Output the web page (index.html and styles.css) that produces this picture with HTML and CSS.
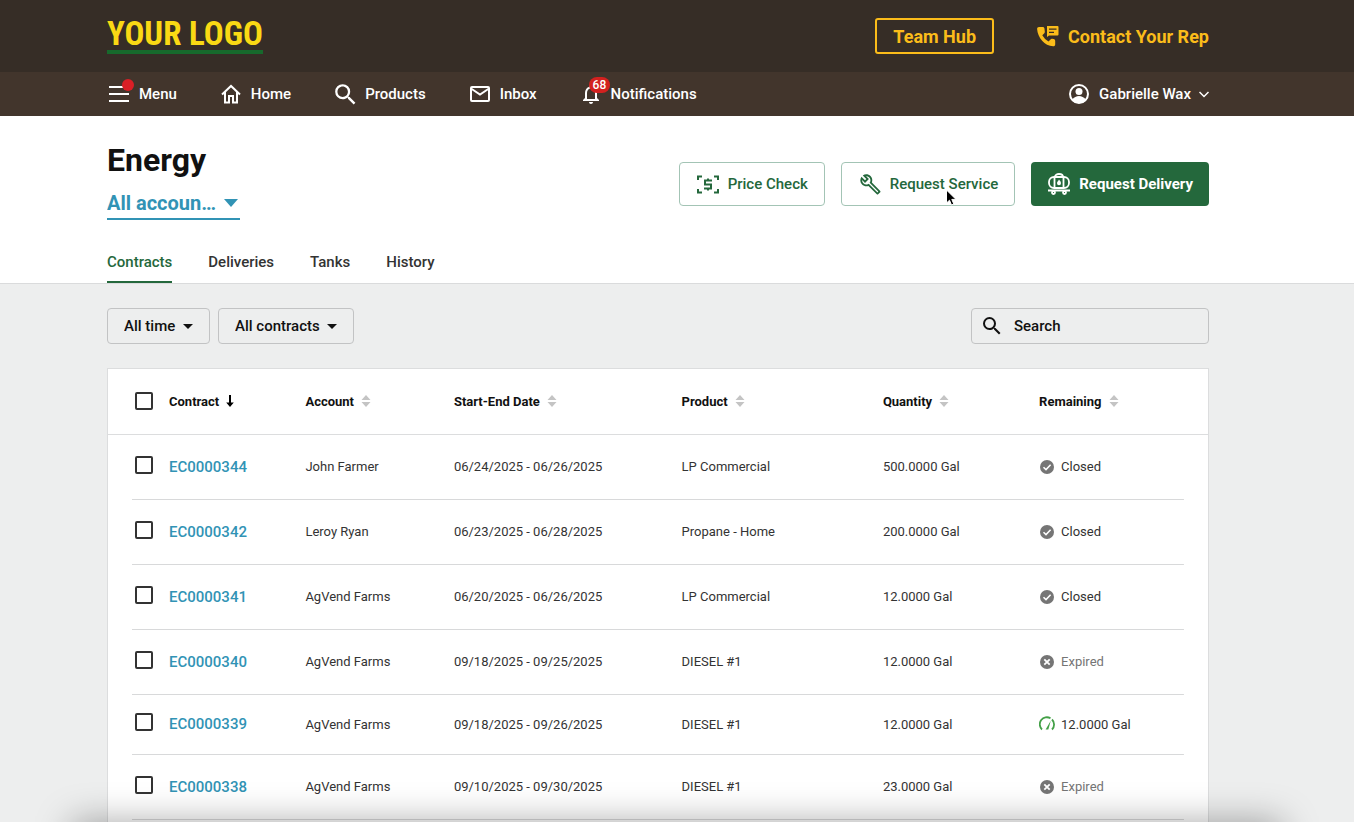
FILE: index.html
```html
<!DOCTYPE html>
<html lang="en">

<head>
	<meta charset="utf-8">
	<meta name="viewport" content="width=device-width, initial-scale=1">
	<title>Energy - Contracts</title>
	<link rel="stylesheet" href="styles.css">
</head>

<body>
	<svg class="sprite" aria-hidden="true">
		<symbol id="sort" viewBox="0 0 10 12">
			<path d="M5 0l4.500 5h-9zM5 12l4.500-5h-9z" fill="#c4c4c4"></path>
		</symbol>
		<symbol id="closed" viewBox="0 0 16 16">
			<circle cx="8" cy="8" r="7" fill="#757575"></circle>
			<path d="M4.500 8.200l2.500 2.400 4.600-4.800" fill="none" stroke="#fff" stroke-width="1.500"></path>
		</symbol>
		<symbol id="expired" viewBox="0 0 16 16">
			<circle cx="8" cy="8" r="7" fill="#757575"></circle>
			<path d="M5.300 5.300l5.400 5.400M10.700 5.300l-5.400 5.400" fill="none" stroke="#fff" stroke-width="1.800"></path>
		</symbol>
		<symbol id="gauge" viewBox="0 0 16 16">
			<path d="M3 13.500A7.070 7.070 0 0 1 11.500 2.300M13 3.500A7.070 7.070 0 0 1 13 13.500" fill="none" stroke="#43a047" stroke-width="1.800"></path>
			<path d="M11.800 4.800L9.300 13.500H6.600z" fill="#43a047"></path>
		</symbol>
		<symbol id="search" viewBox="0 0 24 24">
			<path d="M15.500 14h-.79l-.28-.27A6.471 6.471 0 0 0 16 9.500 6.500 6.500 0 1 0 9.500 16c1.610 0 3.090-.59 4.230-1.570l.27.280v.79l5 4.990L20.490 19l-4.990-5zm-6 0C7.010 14 5 11.990 5 9.500S7.010 5 9.500 5 14 7.010 14 9.500 11.990 14 9.500 14z" fill="currentColor"></path>
		</symbol>
	</svg>

	<header>
		<div class="topbar">
			<a class="logo" href="#">YOUR LOGO</a>
			<div class="topbar-links">
				<button class="team-hub" type="button">Team Hub</button>
				<a class="contact" href="#">
					<svg class="icon" viewBox="0 0 24 24" fill="currentColor">
						<path d="M11 2h10.500a1 1 0 0 1 1 1v7.500a1 1 0 0 1-1 1H13l-2 1.500zM13 4.500v1.200h7.500V4.500zM13 7.800V9h5V7.800z" fill-rule="evenodd"></path>
						<path d="M19 15.200l-2.900-.4c-.6-.1-1.200.1-1.600.6l-2 2a15 15 0 0 1-6.200-6.200l2-2c.4-.4.6-1 .5-1.600L8.400 4.200A1.700 1.700 0 0 0 6.700 3H3C1.900 3 1 3.800 1.100 4.900 1.700 13.500 8.600 21.800 17.200 22.300c1.100.1 2-.8 2-1.900v-3.500c0-.8-.5-1.600-1.200-1.700z"></path>
					</svg>
					Contact Your Rep
				</a>
			</div>
		</div>
		<nav class="navbar">
			<a href="#">
				<span class="icon-wrap">
					<svg class="icon" viewBox="0 0 24 24" fill="currentColor"><path d="M2 4h20v2H2zM2 11h20v2H2zM2 18h20v2H2z"></path></svg>
					<span class="dot"></span>
				</span>
				Menu
			</a>
			<a href="#">
				<svg class="icon" viewBox="0 0 24 24" fill="none" stroke="currentColor" stroke-width="2"><path d="M3 12.500L12 4l9 8.500M6 10v10.500h4V14h4v6.500h4V10"></path></svg>
				Home
			</a>
			<a href="#">
				<svg class="icon nav-search" viewBox="2 2 19 19"><use href="#search" width="24" height="24"></use></svg>
				Products
			</a>
			<a href="#">
				<svg class="icon" viewBox="0 0 24 24" fill="none" stroke="currentColor" stroke-width="2"><rect x="3" y="5" width="18" height="14" rx="1"></rect><path d="M3 6.500l9 6 9-6"></path></svg>
				Inbox
			</a>
			<a href="#">
				<span class="icon-wrap">
					<svg class="icon" viewBox="0 0 24 24" fill="currentColor"><path d="M12 22c1.100 0 2-.9 2-2h-4c0 1.100.9 2 2 2zm6-6v-5c0-3.070-1.630-5.640-4.500-6.320V4c0-.83-.67-1.500-1.500-1.500s-1.500.67-1.500 1.500v.68C7.640 5.360 6 7.920 6 11v5l-2 2v1h16v-1l-2-2zm-2 1H8v-6c0-2.480 1.510-4.500 4-4.500s4 2.020 4 4.500v6z"></path></svg>
					<span class="badge">68</span>
				</span>
				Notifications
			</a>
			<a class="profile" href="#">
				<svg class="icon" viewBox="0 0 24 24" fill="none" stroke="currentColor" stroke-width="2">
					<circle cx="12" cy="12" r="9"></circle>
					<circle cx="12" cy="9.500" r="3.500" fill="currentColor" stroke="none"></circle>
					<path d="M5 18c2-3 4.500-4 7-4s5 1 7 4l-2.500 2.500h-9z" fill="currentColor" stroke="none"></path>
				</svg>
				Gabrielle Wax
				<svg class="chevron" viewBox="0 0 10 10" fill="none" stroke="currentColor" stroke-width="1.500"><path d="M.5 3L5 7.500 9.500 3"></path></svg>
			</a>
		</nav>
	</header>

	<section class="page-head">
		<div class="title-row">
			<div class="title">
				<h1>Energy</h1>
				<label class="account-select">
					<select aria-label="Account">
						<option>All accoun…</option>
					</select>
				</label>
			</div>
			<div class="actions">
				<button class="action" type="button">
					<svg class="icon" viewBox="0 0 24 24" fill="none" stroke="currentColor" stroke-width="2">
						<path d="M6 4.500H2V8M18 4.500h4V8M6 20.500H2V17M18 20.500h4V17"></path>
						<path d="M16 8.500H9v4h6v4H8M12 6.500v2M12 16.500v2"></path>
					</svg>
					Price Check
				</button>
				<button class="action" type="button">
					<svg class="icon" viewBox="0 0 26 26" fill="currentColor">
						<path d="M22.610 18.990l-9.080-9.080c.93-2.340.45-5.100-1.440-7C9.790.61 6.210.4 3.660 2.260L7.500 6.110 6.080 7.520 2.250 3.690C.39 6.230.6 9.820 2.900 12.110c1.860 1.860 4.570 2.350 6.890 1.480l9.110 9.110c.39.39 1.020.39 1.410 0l2.300-2.300c.4-.38.4-1.010 0-1.410zm-3 1.600l-9.460-9.460c-.61.45-1.290.72-2 .82-1.360.2-2.790-.21-3.830-1.250C3.370 9.760 2.930 8.500 3 7.260l3.090 3.090 4.240-4.240-3.090-3.090c1.240-.07 2.490.37 3.440 1.310 1.080 1.080 1.490 2.570 1.240 3.960-.12.71-.42 1.370-.88 1.960l9.450 9.450-.88.89z" transform="translate(1.500 1.500)"></path>
					</svg>
					Request Service
				</button>
				<button class="action primary" type="button">
					<svg class="icon" viewBox="0 0 24 24" fill="none" stroke="currentColor" stroke-width="1.800">
						<rect x="2" y="5" width="20" height="11" rx="5"></rect>
						<path d="M8 5c0-4 8-4 8 0M7.500 5v11M16.500 5v11M1 18.500h22"></path>
						<circle cx="6.500" cy="20.500" r="1.500"></circle>
						<circle cx="17.500" cy="20.500" r="1.500"></circle>
						<path d="M12 7.500c1 1.400 2 2.300 2 3.700a2 2 0 0 1-4 0c0-1.200 1-2 2-3.700z" fill="currentColor" stroke="none"></path>
					</svg>
					Request Delivery
				</button>
				<svg class="cursor" viewBox="0 0 12 18"><path d="M1.500 1v13l3-2.800 2 4.800 2.300-1-2-4.600H11z" fill="#000" stroke="#fff"></path></svg>
			</div>
		</div>
		<nav class="tabs">
			<a class="active" href="#">Contracts</a>
			<a href="#">Deliveries</a>
			<a href="#">Tanks</a>
			<a href="#">History</a>
		</nav>
	</section>

	<main>
		<div class="filters">
			<label class="filter">
				<select aria-label="Period"><option>All time</option></select>
			</label>
			<label class="filter">
				<select aria-label="Contracts"><option>All contracts</option></select>
			</label>
			<label class="search">
				<svg class="icon"><use href="#search"></use></svg>
				<input type="text" placeholder="Search" aria-label="Search">
			</label>
		</div>

		<div class="card">
			<table>
				<colgroup>
					<col class="col-check">
					<col class="col-contract">
					<col class="col-account">
					<col class="col-date">
					<col class="col-product">
					<col class="col-quantity">
					<col>
				</colgroup>
				<thead>
					<tr>
						<th><input type="checkbox" aria-label="Select all"></th>
						<th>Contract <svg class="arrow" viewBox="0 0 8 12"><path d="M3 0h2v7.500h2.800L4 12 .2 7.500H3z"></path></svg></th>
						<th>Account <svg class="sort"><use href="#sort"></use></svg></th>
						<th>Start-End Date <svg class="sort"><use href="#sort"></use></svg></th>
						<th>Product <svg class="sort"><use href="#sort"></use></svg></th>
						<th>Quantity <svg class="sort"><use href="#sort"></use></svg></th>
						<th>Remaining <svg class="sort"><use href="#sort"></use></svg></th>
					</tr>
				</thead>
				<tbody>
					<tr>
						<td><input type="checkbox" aria-label="Select EC0000344"></td>
						<td><a href="#">EC0000344</a></td>
						<td>John Farmer</td>
						<td>06/24/2025 - 06/26/2025</td>
						<td>LP Commercial</td>
						<td>500.0000 Gal</td>
						<td><span class="status"><svg><use href="#closed"></use></svg>Closed</span></td>
					</tr>
					<tr>
						<td><input type="checkbox" aria-label="Select EC0000342"></td>
						<td><a href="#">EC0000342</a></td>
						<td>Leroy Ryan</td>
						<td>06/23/2025 - 06/28/2025</td>
						<td>Propane - Home</td>
						<td>200.0000 Gal</td>
						<td><span class="status"><svg><use href="#closed"></use></svg>Closed</span></td>
					</tr>
					<tr>
						<td><input type="checkbox" aria-label="Select EC0000341"></td>
						<td><a href="#">EC0000341</a></td>
						<td>AgVend Farms</td>
						<td>06/20/2025 - 06/26/2025</td>
						<td>LP Commercial</td>
						<td>12.0000 Gal</td>
						<td><span class="status"><svg><use href="#closed"></use></svg>Closed</span></td>
					</tr>
					<tr>
						<td><input type="checkbox" aria-label="Select EC0000340"></td>
						<td><a href="#">EC0000340</a></td>
						<td>AgVend Farms</td>
						<td>09/18/2025 - 09/25/2025</td>
						<td>DIESEL #1</td>
						<td>12.0000 Gal</td>
						<td><span class="status expired"><svg><use href="#expired"></use></svg>Expired</span></td>
					</tr>
					<tr class="open">
						<td><input type="checkbox" aria-label="Select EC0000339"></td>
						<td><a href="#">EC0000339</a></td>
						<td>AgVend Farms</td>
						<td>09/18/2025 - 09/26/2025</td>
						<td>DIESEL #1</td>
						<td>12.0000 Gal</td>
						<td><span class="status"><svg><use href="#gauge"></use></svg>12.0000 Gal</span></td>
					</tr>
					<tr>
						<td><input type="checkbox" aria-label="Select EC0000338"></td>
						<td><a href="#">EC0000338</a></td>
						<td>AgVend Farms</td>
						<td>09/10/2025 - 09/30/2025</td>
						<td>DIESEL #1</td>
						<td>23.0000 Gal</td>
						<td><span class="status expired"><svg><use href="#expired"></use></svg>Expired</span></td>
					</tr>
				</tbody>
			</table>
		</div>
	</main>
	<div class="bottom-shade"></div>
</body>

</html>
```
FILE: styles.css
```css
* {
	box-sizing: border-box;
}

body {
	background-color: #EDEEEE;
	color: #333;
	font-family: Roboto, sans-serif;
	font-size: 15px;
	font-weight: 500;
	margin: 0;
	overflow: hidden;
}

a {
	color: inherit;
	text-decoration: none;
}

button, input, select {
	color: inherit;
	font: inherit;
}

.sprite {
	display: none;
}

.icon {
	display: block;
	flex: none;
	height: 24px;
	width: 24px;
}

.topbar, .navbar, .page-head, main {
	padding-left: 107px;
	padding-right: 145px;
}

/* top bar */

.topbar {
	align-items: center;
	background-color: #362D26;
	color: #FBBC1A;
	display: flex;
	font-size: 18px;
	font-weight: 700;
	height: 72px;
	justify-content: space-between;
}

.logo {
	border-bottom: 4px solid #17692C;
	color: #FAD914;
	font-family: "Liberation Sans Narrow", "Roboto Condensed", Roboto, sans-serif;
	font-size: 33px;
	line-height: 32px;
}

.topbar-links {
	align-items: center;
	display: flex;
	gap: 42px;
}

.team-hub {
	background: none;
	border: 2px solid #FBBC1A;
	border-radius: 3px;
	height: 36px;
	padding: 0 16px;
}

.contact {
	align-items: center;
	display: flex;
	gap: 8px;
}

/* navigation */

.navbar {
	background-color: #42352C;
	color: #FFF;
	display: flex;
	gap: 42px;
	height: 44px;
}

.navbar a {
	align-items: center;
	display: flex;
	gap: 8px;
}

.nav-search {
	padding: 1px;
}

.navbar .profile {
	margin-left: auto;
}

.chevron {
	height: 10px;
	width: 10px;
}

.icon-wrap {
	position: relative;
}

.dot {
	background-color: #DA1F26;
	border-radius: 50%;
	height: 12px;
	position: absolute;
	right: -3px;
	top: -3px;
	width: 12px;
}

.badge {
	background-color: #D3211F;
	border-radius: 8px;
	font-size: 12px;
	left: 10px;
	line-height: 16px;
	padding: 0 4px;
	position: absolute;
	top: -5px;
}

/* page head */

.page-head {
	background-color: #FFF;
	border-bottom: 1px solid #DADBDC;
}

.title-row {
	align-items: flex-start;
	display: flex;
	justify-content: space-between;
	padding-top: 24px;
}

h1 {
	color: #111;
	font-size: 32px;
	font-weight: 700;
	line-height: 40px;
	margin: 0;
}

.account-select {
	align-items: center;
	border-bottom: 2px solid #3193B5;
	color: #3193B5;
	display: grid;
	font-size: 20px;
	font-weight: 700;
	height: 32px;
	margin-top: 8px;
	width: 133px;
}

.account-select select, .filter select {
	appearance: none;
	background: none;
	border: 0;
	grid-area: 1 / 1;
	margin: 0;
	outline: 0;
	padding: 0;
}

.account-select::after, .filter::after {
	border: 7px solid transparent;
	border-bottom: 0;
	border-top: 8px solid #3193B5;
	content: "";
	grid-area: 1 / 1;
	justify-self: end;
	margin-right: 2px;
	pointer-events: none;
}

.actions {
	display: flex;
	gap: 16px;
	padding-top: 22px;
	position: relative;
}

.action {
	align-items: center;
	background-color: #FFF;
	border: 1px solid #A3C4B5;
	border-radius: 4px;
	color: #24683C;
	display: flex;
	gap: 8px;
	height: 44px;
	padding: 0 16px;
}

.action.primary {
	background-color: #24683C;
	border: 0;
	color: #FFF;
	font-weight: 700;
}

.cursor {
	height: 18px;
	position: absolute;
	right: 252px;
	top: 49px;
	width: 12px;
}

.tabs {
	display: flex;
	gap: 36px;
	padding-top: 24px;
}

.tabs a {
	border-bottom: 2px solid transparent;
	line-height: 37px;
}

.tabs .active {
	border-color: #24683C;
	color: #24683C;
}

/* filters */

main {
	padding-top: 24px;
}

.filters {
	color: #111;
	display: flex;
	gap: 8px;
	margin-bottom: 24px;
}

.filter, .search {
	align-items: center;
	border: 1px solid #C2C3C4;
	border-radius: 4px;
	height: 36px;
	padding: 0 16px;
}

.filter {
	display: grid;
}

.filter select {
	padding-right: 17px;
}

.filter::after {
	border-width: 5px 5px 0;
	border-top-color: #111;
	margin-right: 0;
}

.search {
	display: flex;
	gap: 10px;
	margin-left: auto;
	padding: 0 8px;
	width: 238px;
}

.search input {
	background: none;
	border: 0;
	min-width: 0;
	outline: 0;
	padding: 0;
}

.search input::placeholder {
	color: #111;
}

/* contracts table */

.card {
	background-color: #FFF;
	border: 1px solid #DCDDDE;
	padding-bottom: 24px;
}

table {
	border-collapse: separate;
	border-spacing: 0;
	font-size: 13px;
	table-layout: fixed;
	width: 100%;
}

.col-check {
	width: 61px;
}

.col-contract {
	width: 12.4%;
}

.col-account {
	width: 13.5%;
}

.col-date {
	width: 20.7%;
}

.col-product {
	width: 18.3%;
}

.col-quantity {
	width: 14.2%;
}

th, td {
	font-weight: 400;
	height: 65px;
	padding: 0;
	text-align: left;
	white-space: nowrap;
}

td {
	padding-bottom: 2px;
}

th {
	border-bottom: 1px solid #DCDDDE;
	color: #111;
	font-weight: 700;
	height: 66px;
}

/* row lines stop 24px short of the card edges */
tbody tr {
	background: linear-gradient(#D8D9DA, #D8D9DA) bottom center / calc(100% - 48px) 1px no-repeat;
}

.open td {
	height: 60px;
}

th:first-child {
	padding: 0 0 2px 27px;
}

td:first-child {
	padding: 0 0 6px 27px;
}

td a {
	color: #3193B5;
	font-size: 15px;
	font-weight: 500;
}

input[type="checkbox"] {
	appearance: none;
	border: 2px solid #333;
	border-radius: 2px;
	display: block;
	height: 18px;
	margin: 0;
	width: 18px;
}

.sort {
	height: 12px;
	margin-left: 4px;
	vertical-align: -1px;
	width: 10px;
}

.arrow {
	height: 12px;
	margin-left: 4px;
	vertical-align: -1px;
	width: 8px;
}

.status {
	align-items: center;
	display: flex;
	gap: 6px;
}

.status svg {
	height: 16px;
	width: 16px;
}

.expired {
	color: #757575;
}

/* soft shade rising from the bottom edge of the window */
.bottom-shade {
	bottom: -40px;
	box-shadow: 0 0 36px rgba(0, 0, 0, .35);
	height: 40px;
	left: 72px;
	pointer-events: none;
	position: fixed;
	right: 72px;
}
```
